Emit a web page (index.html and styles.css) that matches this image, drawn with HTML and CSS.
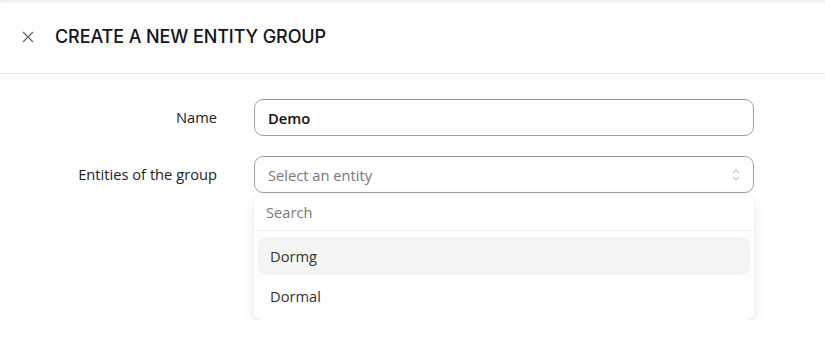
FILE: index.html
```html
<!DOCTYPE html>
<html lang="en">
<head>
  <meta charset="UTF-8">
  <title>Create a new entity group</title>
  <link rel="stylesheet" href="styles.css">
</head>
<body>

  <!-- Header -->
  <div class="header">
    <span class="close">
      <svg width="12" height="12" viewBox="0 0 12 12"><path d="M1 1L11 11M11 1L1 11" stroke="#666" stroke-width="1.2" fill="none"/></svg>
    </span>
    <div class="title">CREATE A NEW ENTITY GROUP</div>
  </div>

  <!-- Form -->
  <div class="form">
    <div class="row">
      <label class="label">Name</label>
      <div class="field">
        <div class="input value">Demo</div>
      </div>
    </div>
    <div class="row">
      <label class="label">Entities of the group</label>
      <div class="field">
        <div class="input select">
          <span class="placeholder">Select an entity</span>
          <svg class="chevrons" width="10" height="16" viewBox="0 0 10 16"><path d="M2 6L5 3L8 6M2 10L5 13L8 10" stroke="#aaa" stroke-width="1" fill="none"/></svg>
        </div>
        <div class="dropdown">
          <div class="search">Search</div>
          <div class="options">
            <div class="option active">Dormg</div>
            <div class="option">Dormal</div>
          </div>
        </div>
      </div>
    </div>
  </div>

</body>
</html>
```

FILE: styles.css
```css
body {
  margin: 0;
  font-family: "Open Sans", "Noto Sans", sans-serif;
  background-color: #fff;
  color: #222;
}

.header {
  height: 74px;
  display: flex;
  align-items: center;
  padding-left: 22px;
  border-bottom: 1px solid #e9e9e9;
  box-shadow: inset 0 4px 4px -2px rgba(0, 0, 0, 0.07);
  box-sizing: border-box;
}

.close {
  display: flex;
  margin-right: 21px;
  margin-top: 1px;
}

.title {
  font-family: Inter, sans-serif;
  font-size: 18px;
  font-weight: 500;
  color: #10131c;
  letter-spacing: -0.1px;
}

.form {
  padding-top: 25px;
  display: flex;
  flex-direction: column;
  gap: 20px;
}

.row {
  display: flex;
  align-items: flex-start;
}

.label {
  width: 217px;
  text-align: right;
  font-size: 14.7px;
  color: #222;
  line-height: 37px;
  margin-right: 37px;
}

.field {
  width: 500px;
}

.input {
  height: 37px;
  border: 1px solid #a3a3a3;
  border-radius: 9px;
  box-sizing: border-box;
  padding: 0 13px;
  display: flex;
  align-items: center;
  font-size: 14.7px;
}

.value {
  font-weight: 600;
  color: #111;
}

.select {
  justify-content: space-between;
  padding-right: 12px;
}

.placeholder {
  color: #777;
}

.chevrons {
  display: block;
}

.dropdown {
  margin-top: 2px;
  background-color: #fff;
  border-radius: 8px;
  box-shadow: 0 4px 14px rgba(0, 0, 0, 0.09), 0 0 2px rgba(0, 0, 0, 0.05);
  overflow: hidden;
}

.search {
  height: 36px;
  line-height: 34px;
  padding-left: 12px;
  font-size: 14.7px;
  color: #777;
  border-bottom: 1px solid #f0f0f0;
  box-sizing: border-box;
}

.options {
  padding: 6px 4px 5px;
  display: flex;
  flex-direction: column;
  gap: 2px;
}

.option {
  height: 38px;
  line-height: 38px;
  padding-left: 12px;
  font-size: 14.7px;
  color: #333;
  border-radius: 8px;
}

.option.active {
  background-color: #f4f5f5;
}
```
